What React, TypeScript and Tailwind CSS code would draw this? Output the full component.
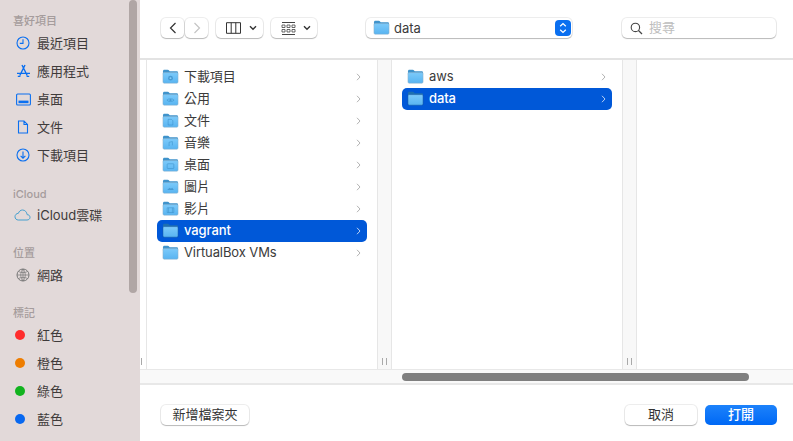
import React, { useId } from "react";

const cjk = "font-['Inter','Noto_Sans_CJK_TC',sans-serif]";
const btnShadow = "shadow-[0_0_0_1px_rgba(0,0,0,0.07),0_1px_1px_rgba(0,0,0,0.22)]";

type Glyph = "download" | "public" | "doc" | "music" | "desktop" | "photo" | "movie";

const glyphs: Record<Glyph, React.ReactNode> = {
  download: <><circle cx="9" cy="9.5" r="2.6" fill="#3d90c9" /><circle cx="9" cy="9.5" r="1" fill="#8fd2fa" /></>,
  public: <><path d="M5.2 9.5C6.5 7.6 11.5 7.6 12.8 9.5 11.5 11.4 6.5 11.4 5.2 9.5Z" fill="none" stroke="#3d90c9" strokeWidth="0.8" /><circle cx="9" cy="9.5" r="1.1" fill="#3d90c9" /></>,
  doc: <path d="M6.5 6.5H10L11.5 8V12.5H6.5Z" fill="none" stroke="#3d90c9" strokeWidth="0.8" />,
  music: <path d="M7.5 11.5V7.5L11 6.8V10.8" fill="none" stroke="#3d90c9" strokeWidth="0.8" />,
  desktop: <rect x="5.5" y="7" width="7" height="5" rx="0.6" fill="none" stroke="#3d90c9" strokeWidth="0.8" />,
  photo: <path d="M5.5 11.5L8 9L9.5 10.2L10.8 9L12.5 11.5Z" fill="#3d90c9" />,
  movie: <path d="M5.5 7H12.5V12H5.5ZM7 7V12M11 7V12" fill="none" stroke="#3d90c9" strokeWidth="0.8" />,
};

function FolderIcon({ glyph, selected = false }: { glyph?: Glyph; selected?: boolean }) {
  const id = useId();
  return (
    <svg width="17" height="15" viewBox="0 0 18 15.5" className="-mt-[2px] shrink-0">
      <defs>
        <linearGradient id={id} x1="0" y1="0" x2="0" y2="1">
          <stop offset="0" stopColor="#7ccafa" />
          <stop offset="1" stopColor="#58b4f1" />
        </linearGradient>
      </defs>
      <path d="M1 2.2C1 1.2 1.6 .6 2.6 .6H6C6.8 .6 7.2 1 7.7 1.6L8.2 2.2H15.6C16.5 2.2 17 2.8 17 3.6V6H1Z" fill={selected ? "#1d6fb0" : "#3f93cb"} />
      <rect x="1" y="3.6" width="16" height="11.2" rx="1.2" fill={`url(#${id})`} stroke={selected ? "#0c4a94" : "#8eaec6"} strokeWidth="0.5" />
      {glyph && <g opacity="0.75">{glyphs[glyph]}</g>}
    </svg>
  );
}

function Chevron({ className }: { className: string }) {
  return (
    <svg width="5" height="8" viewBox="0 0 5 8" className={className}>
      <path d="M1 .8L4 4L1 7.2" fill="none" stroke="currentColor" strokeWidth="1" />
    </svg>
  );
}

function Row({ name, glyph, selected = false }: { name: string; glyph?: Glyph; selected?: boolean }) {
  return (
    <div className={`flex h-[22px] items-center rounded-[5px] pl-[5px] pr-[6px] ${selected ? "bg-[#0058d8] text-white font-medium" : "text-[#3b3b3b]"}`}>
      <FolderIcon glyph={glyph} selected={selected} />
      <span className="ml-[5px] flex-1 pb-[2px] text-[13px] leading-none tracking-[-0.1px]">{name}</span>
      <Chevron className={selected ? "text-[#b7cff2]" : "text-[#b3b3b3]"} />
    </div>
  );
}

function Handle() {
  return (
    <div className="flex gap-[3px]">
      <div className="h-[7px] w-px bg-[#a9a9a9]" />
      <div className="h-[7px] w-px bg-[#a9a9a9]" />
    </div>
  );
}

function Gutter() {
  return (
    <div className="flex w-[15px] shrink-0 items-end justify-center border-x border-[#e6e6e6] bg-[#f8f8f8] pb-[4px]">
      <Handle />
    </div>
  );
}

function SectionTitle({ children, className }: { children: React.ReactNode; className: string }) {
  return <div className={`flex h-4 items-center pl-[13px] pt-[2px] text-[11px] font-medium leading-none text-[#a59c9c] ${className}`}>{children}</div>;
}

function SideItem({ icon, label }: { icon: React.ReactNode; label: string }) {
  return (
    <div className="flex h-7 items-center text-[13px] text-[#3f3b3b]">
      <div className="flex w-[37px] shrink-0 justify-center pl-[9px]">{icon}</div>
      <span className="leading-none">{label}</span>
    </div>
  );
}

const sideStroke = { fill: "none", stroke: "#0a6ff0", strokeWidth: 1.1 };

function TagDot({ color }: { color: string }) {
  return <div className={`h-[10px] w-[10px] rounded-full ${color} mr-[6px]`} />;
}

export default function App() {
  const folders: { name: string; glyph?: Glyph; selected?: boolean }[] = [
    { name: "下載項目", glyph: "download" },
    { name: "公用", glyph: "public" },
    { name: "文件", glyph: "doc" },
    { name: "音樂", glyph: "music" },
    { name: "桌面", glyph: "desktop" },
    { name: "圖片", glyph: "photo" },
    { name: "影片", glyph: "movie" },
    { name: "vagrant", selected: true },
    { name: "VirtualBox VMs" },
  ];

  return (
    <div className={`flex h-[441px] w-[793px] overflow-hidden bg-white ${cjk}`}>
      {/* sidebar */}
      <aside className="relative w-[140px] shrink-0 bg-[#e2d9d9] pt-[12px]">
        <SectionTitle className="mb-px">喜好項目</SectionTitle>
        <SideItem label="最近項目" icon={<svg width="14" height="14" viewBox="0 0 14 14"><circle cx="7" cy="7" r="6" {...sideStroke} /><path d="M7 3.2V7.4H3.8" {...sideStroke} /></svg>} />
        <SideItem label="應用程式" icon={<svg width="15" height="14" viewBox="0 0 15 14"><path d="M6 1L11.2 11.5M9 1L3.8 11.5M1 9.4H14M1.8 12.4H4.4M10.6 12.4H13.2" {...sideStroke} strokeWidth="1.4" /></svg>} />
        <SideItem label="桌面" icon={<svg width="15" height="13" viewBox="0 0 15 13"><rect x=".6" y="1" width="13.8" height="11" rx="1" {...sideStroke} /><rect x="2.5" y="7.6" width="10" height="2.6" fill="#0a6ff0" /></svg>} />
        <SideItem label="文件" icon={<svg width="12" height="14" viewBox="0 0 12 14"><path d="M1.5 1H7L10.5 4.5V13H1.5ZM7 1V4.5H10.5" {...sideStroke} /></svg>} />
        <SideItem label="下載項目" icon={<svg width="14" height="14" viewBox="0 0 14 14"><circle cx="7" cy="7" r="6" {...sideStroke} /><path d="M7 3.5V10M4.6 7.8L7 10.2L9.4 7.8" {...sideStroke} /></svg>} />
        <SectionTitle className="mt-4">iCloud</SectionTitle>
        <SideItem label="iCloud雲碟" icon={<svg width="17" height="12" viewBox="0 0 17 12" className="-ml-px"><path d="M4.2 11H13C14.8 11 16 9.8 16 8.3C16 6.7 14.7 5.6 13.2 5.7C12.8 3 10.9 1 8.6 1C6.6 1 5 2.3 4.4 4.3C2.5 4.4 1 5.8 1 7.7C1 9.6 2.4 11 4.2 11Z" fill="none" stroke="#45a0cf" strokeWidth="1" /></svg>} />
        <SectionTitle className="mt-[15px] mb-px">位置</SectionTitle>
        <SideItem label="網路" icon={<svg width="14" height="14" viewBox="0 0 14 14"><circle cx="7" cy="7" r="6" fill="none" stroke="#777" strokeWidth="1" /><path d="M7 1V13M1 7H13M2.5 3.5C5 5 9 5 11.5 3.5M2.5 10.5C5 9 9 9 11.5 10.5M7 1C4 4 4 10 7 13M7 1C10 4 10 10 7 13" fill="none" stroke="#777" strokeWidth="0.7" /></svg>} />
        <SectionTitle className="mt-[15px] mb-px">標記</SectionTitle>
        <SideItem label="紅色" icon={<TagDot color="bg-[#ff2d2d]" />} />
        <SideItem label="橙色" icon={<TagDot color="bg-[#ee7d00]" />} />
        <SideItem label="綠色" icon={<TagDot color="bg-[#12b31f]" />} />
        <SideItem label="藍色" icon={<TagDot color="bg-[#0868f0]" />} />
        <div className="absolute left-[129px] top-0 h-[293px] w-2 rounded-full bg-[#b0a6a5]" />
      </aside>

      <main className="flex min-w-0 flex-1 flex-col">
        {/* toolbar */}
        <div className="flex h-[60px] shrink-0 items-center border-b-2 border-[#e3e3e3] pb-[4px] pl-[21px] pt-[2px]">
          <div className="flex">
            <div className={`flex h-5 w-[23px] items-center justify-center rounded-[5px] bg-white ${btnShadow}`}>
              <svg width="8" height="12" viewBox="0 0 8 12"><path d="M6.5 1L1.5 6L6.5 11" fill="none" stroke="#333" strokeWidth="1.2" /></svg>
            </div>
            <div className={`ml-px flex h-5 w-[23px] items-center justify-center rounded-[5px] bg-white ${btnShadow}`}>
              <svg width="8" height="12" viewBox="0 0 8 12"><path d="M1.5 1L6.5 6L1.5 11" fill="none" stroke="#c4c4c4" strokeWidth="1.2" /></svg>
            </div>
          </div>
          <div className={`ml-[8px] flex h-5 w-[47px] items-center rounded-[5px] bg-white pl-[10px] ${btnShadow}`}>
            <svg width="15" height="12" viewBox="0 0 15 12"><path d="M.5.7H14.5V11.3H.5ZM5.2.7V11.3M9.8.7V11.3" fill="none" stroke="#333" strokeWidth="1" /></svg>
            <svg width="8" height="6" viewBox="0 0 8 6" className="ml-[8px]"><path d="M1 1.3L4 4.3L7 1.3" fill="none" stroke="#333" strokeWidth="1.4" /></svg>
          </div>
          <div className={`ml-[8px] flex h-5 w-[46px] items-center rounded-[5px] bg-white pl-[10px] ${btnShadow}`}>
            <svg width="15" height="13" viewBox="0 0 15 13"><path d="M1 .5H14M1 12.5H14" stroke="#444" strokeWidth="1" /><path d="M1 3H4V5.5H1ZM6 3H9V5.5H6ZM11 3H14V5.5H11ZM1 7.5H4V10H1ZM6 7.5H9V10H6ZM11 7.5H14V10H11Z" fill="none" stroke="#444" strokeWidth="0.8" /></svg>
            <svg width="8" height="6" viewBox="0 0 8 6" className="ml-[7px]"><path d="M1 1.3L4 4.3L7 1.3" fill="none" stroke="#333" strokeWidth="1.4" /></svg>
          </div>
          <div className={`ml-[49px] flex h-5 w-[206px] items-center rounded-[5px] bg-white pl-[7px] pr-px ${btnShadow}`}>
            <FolderIcon />
            <span className="ml-1 flex-1 text-[13px] leading-none text-[#3b3b3b]">data</span>
            <div className="flex h-4 w-4 items-center justify-center rounded-[4px] bg-[#0a6ff0]">
              <svg width="8" height="12" viewBox="0 0 8 12"><path d="M1.2 4.2L4 1.6L6.8 4.2M1.2 7.8L4 10.4L6.8 7.8" fill="none" stroke="white" strokeWidth="1.3" /></svg>
            </div>
          </div>
          <div className={`ml-[50px] flex h-5 w-[154px] items-center rounded-[5px] bg-white pl-[8px] ${btnShadow}`}>
            <svg width="13" height="13" viewBox="0 0 13 13"><circle cx="5.4" cy="5.4" r="4.2" fill="none" stroke="#444" strokeWidth="1.1" /><path d="M8.5 8.5L12 12" stroke="#444" strokeWidth="1.3" /></svg>
            <span className="ml-[6px] pb-px text-[13px] leading-none text-[#bdbdbd]">搜尋</span>
          </div>
        </div>

        {/* columns */}
        <div className="flex h-[309px] shrink-0">
          <div className="flex w-[7px] shrink-0 items-end border-r border-[#e6e6e6] pb-[4px] pl-px">
            <div className="h-[7px] w-px bg-[#a9a9a9]" />
          </div>
          <div className="w-[230px] shrink-0 px-[10px] pt-[6px]">
            {folders.map((f) => (
              <Row key={f.name} name={f.name} glyph={f.glyph} selected={f.selected} />
            ))}
          </div>
          <Gutter />
          <div className="w-[230px] shrink-0 px-[10px] pt-[6px]">
            <Row name="aws" />
            <Row name="data" selected />
          </div>
          <Gutter />
          <div className="flex-1" />
        </div>

        {/* horizontal scroller */}
        <div className="flex h-[16px] shrink-0 items-center border-t border-b-2 border-[#e8e8e8] bg-[#f9f9f9] pl-[262px] pt-px">
          <div className="h-2 w-[347px] rounded-full bg-[#7f7f7f]" />
        </div>

        {/* footer */}
        <div className="flex flex-1 items-start pl-[21px] pr-[16px] pt-[20px]">
          <button className={`h-5 w-[88px] rounded-[5px] bg-white pb-px text-[13px] leading-none text-[#333] ${btnShadow}`}>新增檔案夾</button>
          <button className={`ml-auto h-5 w-[72px] rounded-[5px] bg-white pb-px text-[13px] leading-none text-[#333] ${btnShadow}`}>取消</button>
          <button className="ml-[8px] h-5 w-[72px] rounded-[5px] bg-gradient-to-b from-[#1c82fb] to-[#0068f5] pb-px text-[13px] font-medium leading-none text-white">打開</button>
        </div>
      </main>
    </div>
  );
}
